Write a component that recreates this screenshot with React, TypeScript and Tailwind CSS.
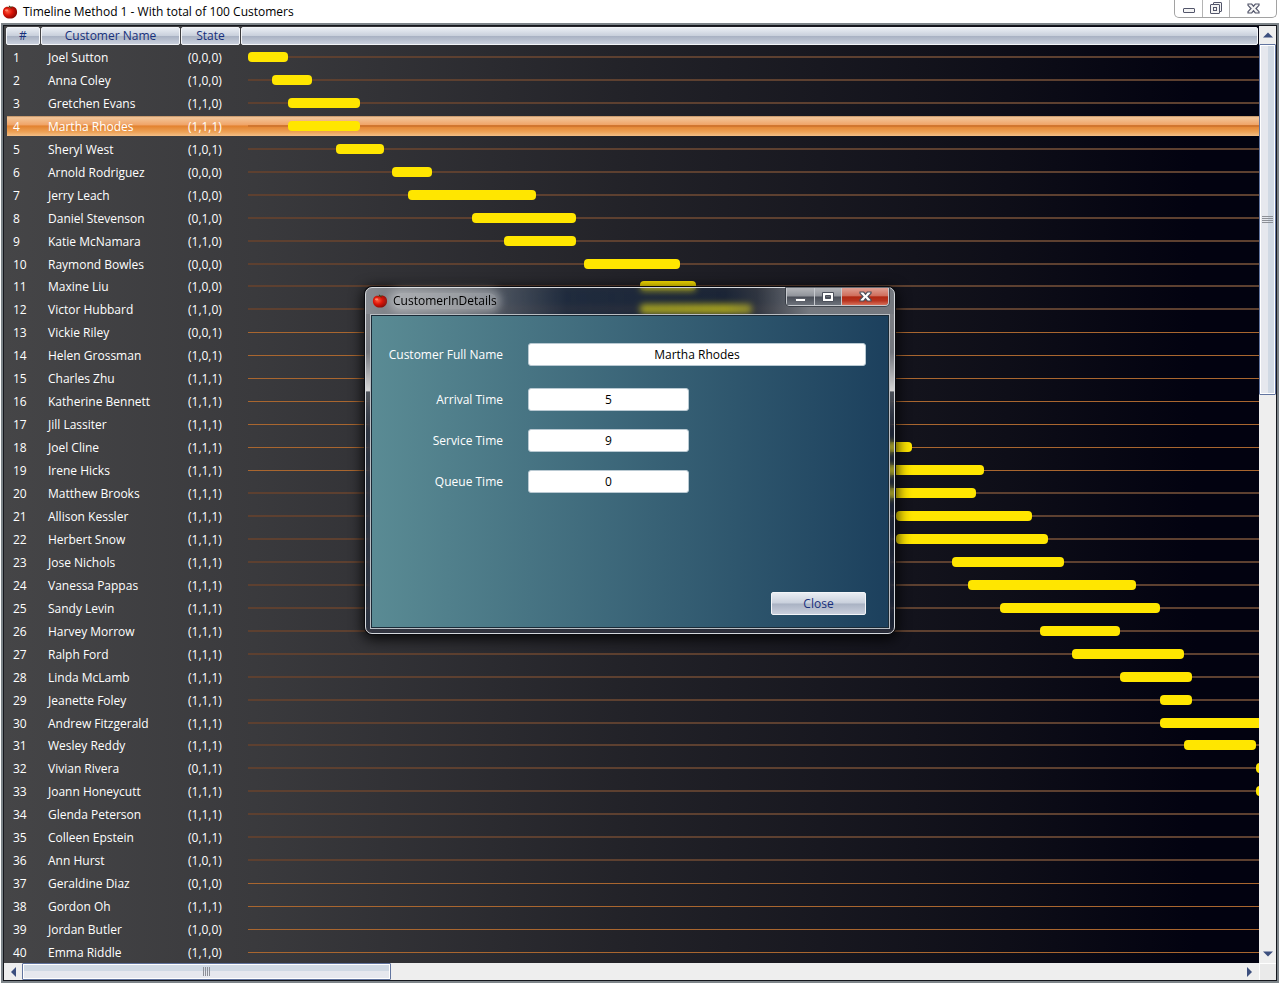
import { useId } from "react";

type Customer = {
  name: string;
  state: string;
  start?: number;
  end?: number;
};

const UNIT = 8;
const SELECTED = 4;

const customers: Customer[] = [
  { name: "Joel Sutton", state: "(0,0,0)", start: 0, end: 5 },
  { name: "Anna Coley", state: "(1,0,0)", start: 3, end: 8 },
  { name: "Gretchen Evans", state: "(1,1,0)", start: 5, end: 14 },
  { name: "Martha Rhodes", state: "(1,1,1)", start: 5, end: 14 },
  { name: "Sheryl West", state: "(1,0,1)", start: 11, end: 17 },
  { name: "Arnold Rodriguez", state: "(0,0,0)", start: 18, end: 23 },
  { name: "Jerry Leach", state: "(1,0,0)", start: 20, end: 36 },
  { name: "Daniel Stevenson", state: "(0,1,0)", start: 28, end: 41 },
  { name: "Katie McNamara", state: "(1,1,0)", start: 32, end: 41 },
  { name: "Raymond Bowles", state: "(0,0,0)", start: 42, end: 54 },
  { name: "Maxine Liu", state: "(1,0,0)", start: 49, end: 56 },
  { name: "Victor Hubbard", state: "(1,1,0)", start: 49, end: 63 },
  { name: "Vickie Riley", state: "(0,0,1)", start: 52, end: 64 },
  { name: "Helen Grossman", state: "(1,0,1)", start: 56, end: 68 },
  { name: "Charles Zhu", state: "(1,1,1)", start: 58, end: 72 },
  { name: "Katherine Bennett", state: "(1,1,1)", start: 63, end: 74 },
  { name: "Jill Lassiter", state: "(1,1,1)", start: 66, end: 78 },
  { name: "Joel Cline", state: "(1,1,1)", start: 72, end: 83 },
  { name: "Irene Hicks", state: "(1,1,1)", start: 75, end: 92 },
  { name: "Matthew Brooks", state: "(1,1,1)", start: 78, end: 91 },
  { name: "Allison Kessler", state: "(1,1,1)", start: 81, end: 98 },
  { name: "Herbert Snow", state: "(1,1,1)", start: 81, end: 100 },
  { name: "Jose Nichols", state: "(1,1,1)", start: 88, end: 102 },
  { name: "Vanessa Pappas", state: "(1,1,1)", start: 90, end: 111 },
  { name: "Sandy Levin", state: "(1,1,1)", start: 94, end: 114 },
  { name: "Harvey Morrow", state: "(1,1,1)", start: 99, end: 109 },
  { name: "Ralph Ford", state: "(1,1,1)", start: 103, end: 117 },
  { name: "Linda McLamb", state: "(1,1,1)", start: 109, end: 118 },
  { name: "Jeanette Foley", state: "(1,1,1)", start: 114, end: 118 },
  { name: "Andrew Fitzgerald", state: "(1,1,1)", start: 114, end: 128 },
  { name: "Wesley Reddy", state: "(1,1,1)", start: 117, end: 126 },
  { name: "Vivian Rivera", state: "(0,1,1)", start: 126, end: 134 },
  { name: "Joann Honeycutt", state: "(1,1,1)", start: 126, end: 138 },
  { name: "Glenda Peterson", state: "(1,1,1)" },
  { name: "Colleen Epstein", state: "(0,1,1)" },
  { name: "Ann Hurst", state: "(1,0,1)" },
  { name: "Geraldine Diaz", state: "(0,1,0)" },
  { name: "Gordon Oh", state: "(1,1,1)" },
  { name: "Jordan Butler", state: "(1,0,0)" },
  { name: "Emma Riddle", state: "(1,1,0)" },
];

const silver =
  "bg-[linear-gradient(180deg,#e9edf3_0%,#c9d0dc_48%,#a9b2c3_52%,#c9cfdc_100%)]";

function Tomato({ className }: { className: string }) {
  const id = useId();
  return (
    <svg viewBox="0 0 16 16" className={className} aria-hidden="true">
      <defs>
        <radialGradient id={id} cx="0.35" cy="0.4" r="0.7">
          <stop offset="0" stopColor="#ff5a3c" />
          <stop offset="0.45" stopColor="#dc1408" />
          <stop offset="1" stopColor="#7a0602" />
        </radialGradient>
      </defs>
      <path
        d="M8 3.4C5 1.8.9 3.4.9 8c0 4 2.800 6.600 7.100 6.600s7.100-2.600 7.100-6.600C15.100 3.400 11 1.800 8 3.400z"
        fill={`url(#${id})`}
      />
      <path d="M8 3.600 4.800 3.200 7 2.700 6.900 1.200 8.300 2.500 11.400 2.400 9.200 3.500 9.800 5z" fill="#4a3a12" />
      <ellipse cx="4.600" cy="6.300" rx="1.700" ry="1.100" fill="#ff9a80" opacity="0.75" />
    </svg>
  );
}

function CloseGlyph({ stroke, fill }: { stroke: string; fill: string }) {
  return (
    <svg viewBox="0 0 13 11" className="h-[11px] w-[13px]" aria-hidden="true">
      <path
        d="M1 1h3.700L6.500 3.200 8.300 1H12v1.300L9 5.500l3 3.200V10H8.300L6.500 7.800 4.700 10H1V8.700l3-3.200-3-3.200z"
        fill={fill}
        stroke={stroke}
        strokeWidth="1.200"
      />
    </svg>
  );
}

function TitleBar() {
  return (
    <header className="flex h-[23px] shrink-0 items-start justify-between pl-0.5">
      <div className="flex h-full items-center gap-[5px]">
        <Tomato className="size-4" />
        <h1 className="text-xs text-black">Timeline Method 1 - With total of 100 Customers</h1>
      </div>
      <div className="mr-[3px] flex h-[18px] overflow-hidden rounded-b-[5px] border border-t-0 border-[#a2a2a2]">
        <button aria-label="Minimize" className="flex w-7 items-center justify-center border-r border-[#b4b4b4] pt-1">
          <svg viewBox="0 0 12 5" className="h-[5px] w-3">
            <rect x="0.500" y="0.500" width="11" height="4" rx="0.500" fill="#f4f4f4" stroke="#53566b" />
          </svg>
        </button>
        <button aria-label="Restore" className="flex w-[27px] items-center justify-center border-r border-[#b4b4b4]">
          <svg viewBox="0 0 13 13" className="size-[13px]" fill="#f4f4f4" stroke="#53566b">
            <rect x="3.500" y="0.500" width="8" height="9" rx="0.500" />
            <rect x="0.500" y="2.500" width="9" height="9" rx="0.500" />
            <rect x="3.500" y="5.500" width="3" height="3" />
          </svg>
        </button>
        <button aria-label="Close window" className="flex w-[46px] items-center justify-center">
          <CloseGlyph stroke="#53566b" fill="#f4f4f4" />
        </button>
      </div>
    </header>
  );
}

function HeadCell({ children }: { children?: string }) {
  return (
    <th scope="col" className="flex p-0 pt-px pr-px font-normal">
      <span
        className={`flex flex-1 items-center justify-center rounded-[2px] border border-[#f3f5f8] text-xs leading-4 text-[#17307c] ${silver}`}
      >
        {children}
      </span>
    </th>
  );
}

function lineStyle(n: number) {
  if (n === SELECTED) return "h-0.5 bg-[#d1762f]";
  const crisp = (n >= 13 && n <= 19) || n >= 37;
  return crisp ? "h-px bg-[#a9662f]" : "h-0.5 bg-[#5d4030]";
}

function TimelineTable() {
  return (
    <table className="flex min-h-0 min-w-0 flex-col overflow-hidden bg-[linear-gradient(90deg,#454547_0%,#3a3a3d_20%,#222228_50%,#0e0e18_80%,#020210_95%)]">
      <thead className="block">
        <tr className="grid h-[19px] grid-cols-[35px_140px_60px_1fr] pl-0.5">
          <HeadCell>#</HeadCell>
          <HeadCell>Customer Name</HeadCell>
          <HeadCell>State</HeadCell>
          <HeadCell />
        </tr>
      </thead>
      <tbody className="grid min-h-0 flex-1 auto-rows-fr pl-[3px] text-xs leading-4 text-white">
        {customers.map((c, i) => {
          const n = i + 1;
          return (
            <tr
              key={c.name}
              aria-selected={n === SELECTED}
              className={`grid min-h-0 grid-cols-[34px_140px_60px_1fr] items-center border-t-2 border-b border-transparent bg-clip-padding ${
                n === SELECTED
                  ? "bg-[linear-gradient(180deg,#b98a5e_0%,#f3c598_8%,#f0a468_44%,#e3822f_50%,#eda257_80%,#f3be86_100%)]"
                  : ""
              }`}
            >
              <td className="p-0 pt-0.5 pl-1.5">{n}</td>
              <td className="p-0 pt-0.5 pl-[7px] whitespace-nowrap">{c.name}</td>
              <td className="p-0 pt-0.5 pl-[7px]">{c.state}</td>
              <td className="flex h-full overflow-hidden p-0 pl-[7px]">
                <div className="relative flex flex-1 items-center">
                  <div className={`w-full ${lineStyle(n)}`} />
                  {c.start !== undefined && c.end !== undefined && (
                    <div
                      className="absolute h-2.5 rounded-[4px] bg-[#ffe600]"
                      style={{ left: c.start * UNIT, width: (c.end - c.start) * UNIT }}
                    />
                  )}
                </div>
              </td>
            </tr>
          );
        })}
      </tbody>
    </table>
  );
}

function Arrow({ d }: { d: string }) {
  return (
    <svg viewBox="0 0 10 10" className="size-2.5" aria-hidden="true">
      <path d={d} fill="#3c4f7e" />
    </svg>
  );
}

function VerticalScrollbar() {
  return (
    <div className="flex flex-col bg-[#eeeeee]">
      <button aria-label="Scroll up" className="flex h-[18px] shrink-0 items-center justify-center">
        <Arrow d="M0 7.500 5 2.500 10 7.500z" />
      </button>
      <div className="min-h-0 flex-1">
        <div className="flex h-[351px] flex-col items-center justify-center gap-px rounded-[1px] border border-[#61749f] bg-[linear-gradient(90deg,#e6e8ee_0_50%,#d0d9e4_50%_100%)] ring-1 ring-white ring-inset">
          <span className="h-px w-[11px] bg-[#8d9097]" />
          <span className="h-px w-[11px] bg-[#8d9097]" />
          <span className="h-px w-[11px] bg-[#8d9097]" />
          <span className="h-px w-[11px] bg-[#8d9097]" />
        </div>
      </div>
      <button aria-label="Scroll down" className="flex h-[18px] shrink-0 items-center justify-center">
        <Arrow d="M0 2.500 5 7.500 10 2.500z" />
      </button>
    </div>
  );
}

function HorizontalScrollbar() {
  return (
    <div className="flex bg-[#eeeeee]">
      <button aria-label="Scroll left" className="flex w-[18px] shrink-0 items-center justify-center">
        <Arrow d="M8 0 3 5 8 10z" />
      </button>
      <div className="flex min-w-0 flex-1">
        <div className="flex w-[369px] items-center justify-center gap-px rounded-[1px] border border-[#61749f] bg-[linear-gradient(180deg,#d0d9e4_0_50%,#e6e8ee_50%_100%)] ring-1 ring-white ring-inset">
          <span className="h-[9px] w-px bg-[#8d9097]" />
          <span className="h-[9px] w-px bg-[#8d9097]" />
          <span className="h-[9px] w-px bg-[#8d9097]" />
          <span className="h-[9px] w-px bg-[#8d9097]" />
        </div>
      </div>
      <button aria-label="Scroll right" className="flex w-[18px] shrink-0 items-center justify-center">
        <Arrow d="M2 0 7 5 2 10z" />
      </button>
    </div>
  );
}

function Field({ label, value, wide }: { label: string; value: string; wide?: boolean }) {
  const id = useId();
  return (
    <div className="grid grid-cols-[131px_1fr] items-center gap-x-[25px]">
      <label htmlFor={id} className="text-right text-xs leading-4 text-white">
        {label}
      </label>
      <input
        id={id}
        readOnly
        value={value}
        className={`h-[23px] rounded-[3px] border border-[#b9c9d2] bg-white text-center text-xs text-black outline-none ${
          wide ? "w-full" : "w-[161px]"
        }`}
      />
    </div>
  );
}

function CustomerDialog() {
  return (
    <section
      role="dialog"
      aria-label="CustomerInDetails"
      className="absolute top-[287px] left-[365px] flex h-[347px] w-[530px] flex-col rounded-[7px] border border-[#d5d8dc] bg-[linear-gradient(90deg,rgba(140,144,150,0.95)_0%,rgba(110,116,124,0.85)_18%,rgba(24,50,84,0.45)_38%,rgba(24,50,84,0.38)_68%,rgba(60,70,84,0.6)_74%,rgba(122,126,133,0.95)_84%,rgba(122,126,133,0.95)_100%),linear-gradient(180deg,rgba(128,131,137,0.95)_0%,rgba(120,124,131,0.95)_12%,rgba(222,222,222,0.95)_24%,rgba(84,90,98,0.85)_24.500%,rgba(40,56,80,0.45)_36%,rgba(34,52,80,0.45)_100%)] bg-[length:100%_26px,100%_319px] bg-[position:top,bottom] bg-no-repeat px-1 pb-1 shadow-[0_0_0_1px_#0a0a0e,0_3px_14px_2px_rgba(0,0,0,0.85)] backdrop-blur-[3px]"
    >
      <header className="flex h-[26px] shrink-0 items-start justify-between pl-0.5">
        <div className="flex h-full items-center gap-[5px]">
          <Tomato className="size-4" />
          <h2 className="rounded-full bg-white/35 text-xs leading-4 text-black shadow-[0_0_8px_4px_rgba(255,255,255,0.35)]">
            CustomerInDetails
          </h2>
        </div>
        <div className="mr-px flex h-[18px] rounded-b-[4px] border border-t-0 border-[#c6c9ce] ring-1 ring-[#22262e]/60">
          <button
            aria-label="Minimize dialog"
            className="flex w-7 items-center justify-center border-r border-[#c6c9ce] bg-[linear-gradient(180deg,#b4b6ba_0%,#90939a_48%,#494d57_52%,#6d727b_100%)] pt-1.5"
          >
            <span className="h-1 w-[11px] border border-[#5c606a] bg-white" />
          </button>
          <button
            aria-label="Maximize dialog"
            className="flex w-[27px] items-center justify-center border-r border-[#c6c9ce] bg-[linear-gradient(180deg,#b4b6ba_0%,#90939a_48%,#494d57_52%,#6d727b_100%)]"
          >
            <svg viewBox="0 0 12 10" className="h-2.5 w-3">
              <path
                d="M.5.5h11v9H.5zM3.500 3.500v3h5v-3z"
                fill="#ffffff"
                fillRule="evenodd"
                stroke="#4b4f5a"
              />
            </svg>
          </button>
          <button
            aria-label="Close dialog"
            className="flex w-[46px] items-center justify-center rounded-br-[3px] bg-[linear-gradient(180deg,#dfa093_0%,#cf6e5c_46%,#b02812_52%,#b83420_75%,#d8705a_100%)]"
          >
            <CloseGlyph stroke="#4b4f5a" fill="#ffffff" />
          </button>
        </div>
      </header>
      <div className="flex min-h-0 flex-1 border border-[#b9bdc2]">
        <form
          className="flex flex-1 flex-col border border-[#1a2a36] bg-[linear-gradient(90deg,#5a8b94_0%,#1c405d_100%)] pt-[27px] pr-[22px] pb-3"
          onSubmit={(e) => e.preventDefault()}
        >
          <Field label="Customer Full Name" value="Martha Rhodes" wide />
          <div className="mt-[22px] flex flex-col gap-[18px]">
            <Field label="Arrival Time" value="5" />
            <Field label="Service Time" value="9" />
            <Field label="Queue Time" value="0" />
          </div>
          <button
            className={`mt-auto h-[23px] w-[95px] self-end rounded-[2px] border border-[#f3f5f8] text-xs leading-4 text-[#17307c] ${silver}`}
          >
            Close
          </button>
        </form>
      </div>
    </section>
  );
}

export default function App() {
  return (
    <div className="relative flex h-screen flex-col overflow-hidden bg-white pb-px font-['Open_Sans','Noto_Sans',sans-serif]">
      <TitleBar />
      <main className="mx-px flex min-h-0 flex-1 border-2 border-[#7d8489]">
        <div className="grid min-h-0 min-w-0 flex-1 grid-cols-[1fr_17px] grid-rows-[minmax(0,1fr)_17px] border border-[#14161c]">
          <TimelineTable />
          <VerticalScrollbar />
          <HorizontalScrollbar />
          <div className="border-t border-l border-white bg-[#eaeaea]" />
        </div>
      </main>
      <CustomerDialog />
    </div>
  );
}
